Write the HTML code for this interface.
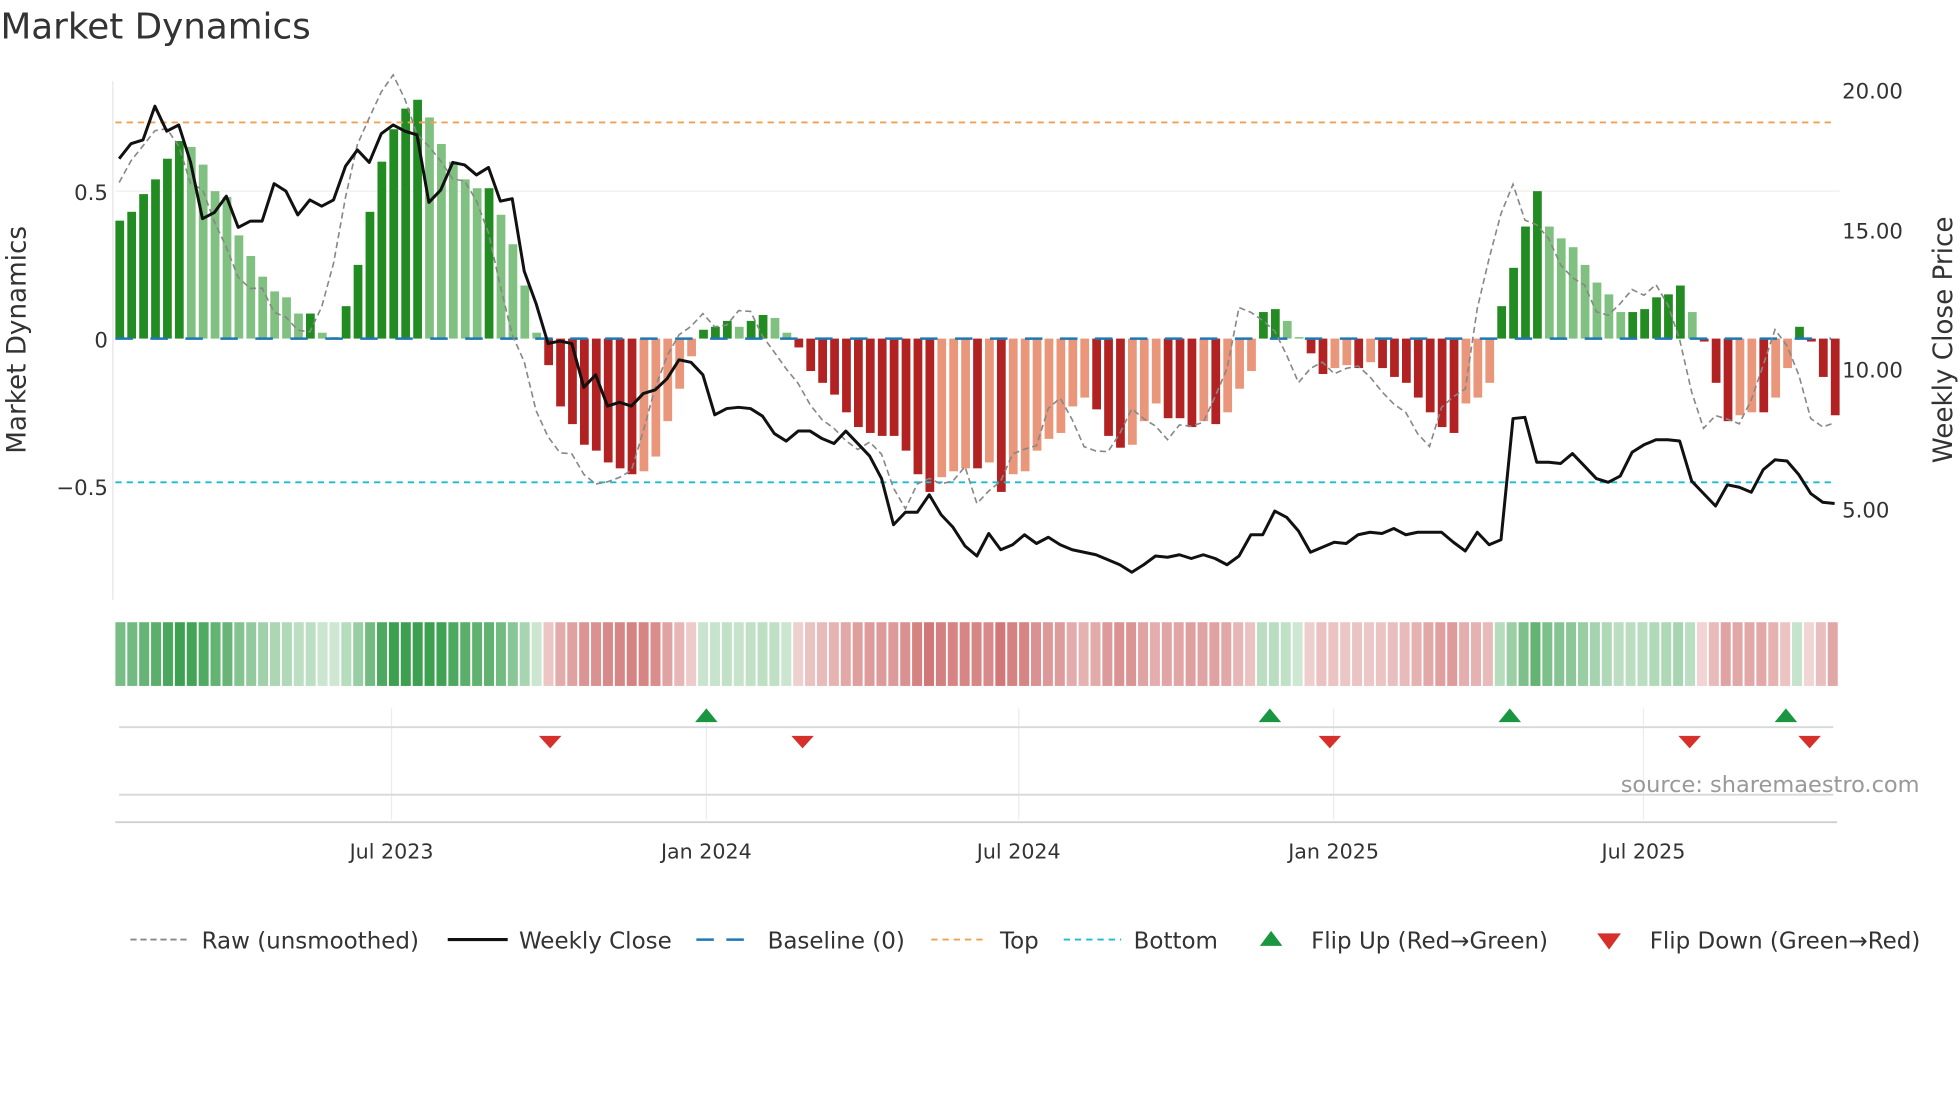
<!DOCTYPE html>
<html><head><meta charset="utf-8"><style>
html,body{margin:0;padding:0;background:#fff;}
svg{display:block;font-family:"DejaVu Sans","Liberation Sans",sans-serif;}
</style></head><body>
<svg id="s" width="1960" height="1102" viewBox="0 0 1568 882" xmlns="http://www.w3.org/2000/svg">
<rect width="1568" height="882" fill="#fff"/>
<text x="0" y="31" font-size="28.6" fill="#333">Market Dynamics</text>
<line x1="90" y1="65" x2="90" y2="480" stroke="#e6e6e6" stroke-width="1"/>
<line x1="92" y1="153" x2="1472" y2="153" stroke="#eeeeee" stroke-width="1"/>
<text x="86" y="160" font-size="17" fill="#333" text-anchor="end">0.5</text>
<text x="86" y="278" font-size="17" fill="#333" text-anchor="end">0</text>
<text x="86" y="396" font-size="17" fill="#333" text-anchor="end">−0.5</text>
<text transform="translate(20,272) rotate(-90)" font-size="21" fill="#333" text-anchor="middle">Market Dynamics</text>
<text x="1474" y="79" font-size="17" fill="#333">20.00</text>
<text x="1474" y="191" font-size="17" fill="#333">15.00</text>
<text x="1474" y="302" font-size="17" fill="#333">10.00</text>
<text x="1474" y="414" font-size="17" fill="#333">5.00</text>
<text transform="translate(1562,272) rotate(-90)" font-size="21" fill="#333" text-anchor="middle">Weekly Close Price</text>
<g id="bars"></g>
<line x1="92" y1="271" x2="1465" y2="271" stroke="#1f77b4" stroke-width="2" stroke-dasharray="14,14"/>
<line x1="92" y1="98" x2="1465" y2="98" stroke="#f0a050" stroke-width="1.5" stroke-dasharray="5,4"/>
<line x1="92" y1="386" x2="1465" y2="386" stroke="#17becf" stroke-width="1.5" stroke-dasharray="5,4"/>
<polyline id="raw" fill="none" stroke="#888" stroke-width="1.3" stroke-dasharray="5,3"/>
<polyline id="close" fill="none" stroke="#111" stroke-width="2.4" stroke-linejoin="round"/>
<g id="strip"></g>
<g stroke="#ececec" stroke-width="1">
<line x1="313" y1="567" x2="313" y2="656"/><line x1="565" y1="567" x2="565" y2="656"/><line x1="815" y1="567" x2="815" y2="656"/><line x1="1067" y1="567" x2="1067" y2="656"/><line x1="1315" y1="567" x2="1315" y2="656"/>
</g>
<line x1="95" y1="582" x2="1467" y2="582" stroke="#d8d8d8" stroke-width="1.5"/>
<line x1="95" y1="636" x2="1467" y2="636" stroke="#d8d8d8" stroke-width="1.5"/>
<line x1="92" y1="658" x2="1470" y2="658" stroke="#d0d0d0" stroke-width="1.5"/>
<g fill="#1a9641">
<polygon points="556,578 565,567 574,578"/><polygon points="1007,578 1016,567 1025,578"/><polygon points="1199,578 1208,567 1217,578"/><polygon points="1420,578 1429,567 1438,578"/>
</g>
<g fill="#d7302a">
<polygon points="431,589 449,589 440,599"/><polygon points="633,589 651,589 642,599"/><polygon points="1055,589 1073,589 1064,599"/><polygon points="1343,589 1361,589 1352,599"/><polygon points="1439,589 1457,589 1448,599"/>
</g>
<text x="1536" y="634" font-size="18" fill="#999" text-anchor="end">source: sharemaestro.com</text>
<g font-size="16.5" fill="#333" text-anchor="middle">
<text x="313" y="687">Jul 2023</text><text x="565" y="687">Jan 2024</text><text x="815" y="687">Jul 2024</text><text x="1067" y="687">Jan 2025</text><text x="1315" y="687">Jul 2025</text>
</g>
<g font-size="18.4" fill="#333">
<line x1="104" y1="752" x2="150" y2="752" stroke="#888" stroke-width="1.5" stroke-dasharray="5,3"/>
<text x="161" y="759">Raw (unsmoothed)</text>
<line x1="358" y1="752" x2="406" y2="752" stroke="#111" stroke-width="2.5"/>
<text x="415" y="759">Weekly Close</text>
<line x1="557" y1="752" x2="603" y2="752" stroke="#1f77b4" stroke-width="2" stroke-dasharray="14,10"/>
<text x="614" y="759">Baseline (0)</text>
<line x1="745" y1="752" x2="790" y2="752" stroke="#f0a050" stroke-width="1.5" stroke-dasharray="5,4"/>
<text x="800" y="759">Top</text>
<line x1="851" y1="752" x2="897" y2="752" stroke="#17becf" stroke-width="1.5" stroke-dasharray="5,4"/>
<text x="907" y="759">Bottom</text>
<polygon points="1008,757 1017,745 1026,757" fill="#1a9641"/>
<text x="1049" y="759">Flip Up (Red→Green)</text>
<polygon points="1278,747 1297,747 1287.5,760" fill="#d7302a"/>
<text x="1320" y="759">Flip Down (Green→Red)</text>
</g>
</svg>
<script>
var v=[0.40,0.43,0.49,0.54,0.61,0.67,0.65,0.59,0.50,0.48,0.35,0.28,0.21,0.16,0.14,0.085,0.085,0.02,0.005,0.11,0.25,0.43,0.60,0.71,0.78,0.81,0.75,0.66,0.60,0.54,0.51,0.51,0.42,0.32,0.18,0.02,
-0.09,-0.23,-0.29,-0.36,-0.38,-0.42,-0.44,-0.46,-0.45,-0.40,-0.28,-0.17,-0.06,
0.03,0.04,0.06,0.04,0.06,0.08,0.07,0.02,
-0.03,-0.11,-0.15,-0.19,-0.25,-0.30,-0.32,-0.33,-0.33,-0.38,-0.46,-0.52,-0.47,-0.45,-0.44,-0.44,-0.42,-0.52,-0.46,-0.45,-0.38,-0.34,-0.32,-0.23,-0.20,-0.24,-0.33,-0.37,-0.36,-0.28,-0.22,-0.27,-0.27,-0.30,-0.28,-0.29,-0.25,-0.17,-0.11,
0.09,0.10,0.06,0.005,
-0.05,-0.12,-0.10,-0.09,-0.10,-0.08,-0.10,-0.13,-0.15,-0.20,-0.25,-0.30,-0.32,-0.22,-0.20,-0.15,
0.11,0.24,0.38,0.50,0.38,0.34,0.31,0.25,0.19,0.15,0.09,0.09,0.10,0.14,0.15,0.18,0.09,
-0.01,-0.15,-0.28,-0.26,-0.25,-0.25,-0.20,-0.10,0.04,-0.01,-0.13,-0.26];
var c=[127,115,112,85,105,100,130,175,170,157,182,177,177,147,153,172,160,165,160,133,120,130,107,100,105,108,162,152,130,132,140,134,161,159,217,243,275,273,275,310,300,325,322,325,315,312,303,288,290,300,332,327,326,327,333,347,353,345,345,351,355,345,355,365,383,420,410,410,396,412,422,437,445,427,440,436,428,435,430,436,440,442,444,448,452,458,452,445,446,444,447,444,447,452,445,428,428,409,414,425,442,438,434,435,428,426,427,423,428,426,426,426,434,441,426,436,432,335,334,370,370,371,363,373,383,386,381,362,356,352,352,353,385,395,405,388,390,394,376,368,369,380,395,402,403];
var n=v.length,sp=(1465-92)/(n-1),ns="http://www.w3.org/2000/svg";
var bars=document.getElementById('bars'),strip=document.getElementById('strip');
function el(t,a,p){var e=document.createElementNS(ns,t);for(var k in a)e.setAttribute(k,a[k]);p.appendChild(e);}
var sw=(1472-92)/n;
for(var i=0;i<n;i++){
 var x=92+i*sp,val=v[i],prev=i?v[i-1]:0,col;
 var grow=Math.abs(val)>=Math.abs(prev)||(val>0)!=(prev>0);
 if(val>=0) col=grow?'#228b22':'#80c080'; else col=grow?'#b22222':'#e9967a';
 var y0=271,y1=271-val*236;
 el('rect',{x:x,y:Math.min(y0,y1),width:7,height:Math.abs(y1-y0),fill:col},bars);
 var a=Math.min(1,0.25+Math.abs(val)*1.1);
 var sc=val>=0?'rgba(60,160,80,'+a+')':'rgba(200,90,90,'+a+')';
 el('rect',{x:92+i*sw,y:498,width:sw-1.5,height:51,fill:sc},strip);
}
var rp=[],cp=[];
for(var i=0;i<n;i++){
 var j=Math.min(i+2,n-1),rv=v[j]*1.08+0.02*Math.sin(i*1.7);
 rp.push((95+i*sp).toFixed(1)+','+(271-rv*236).toFixed(1));
 cp.push((95+i*sp).toFixed(1)+','+c[i]);
}
document.getElementById('raw').setAttribute('points',rp.join(' '));
document.getElementById('close').setAttribute('points',cp.join(' '));
</script>
</body></html>
